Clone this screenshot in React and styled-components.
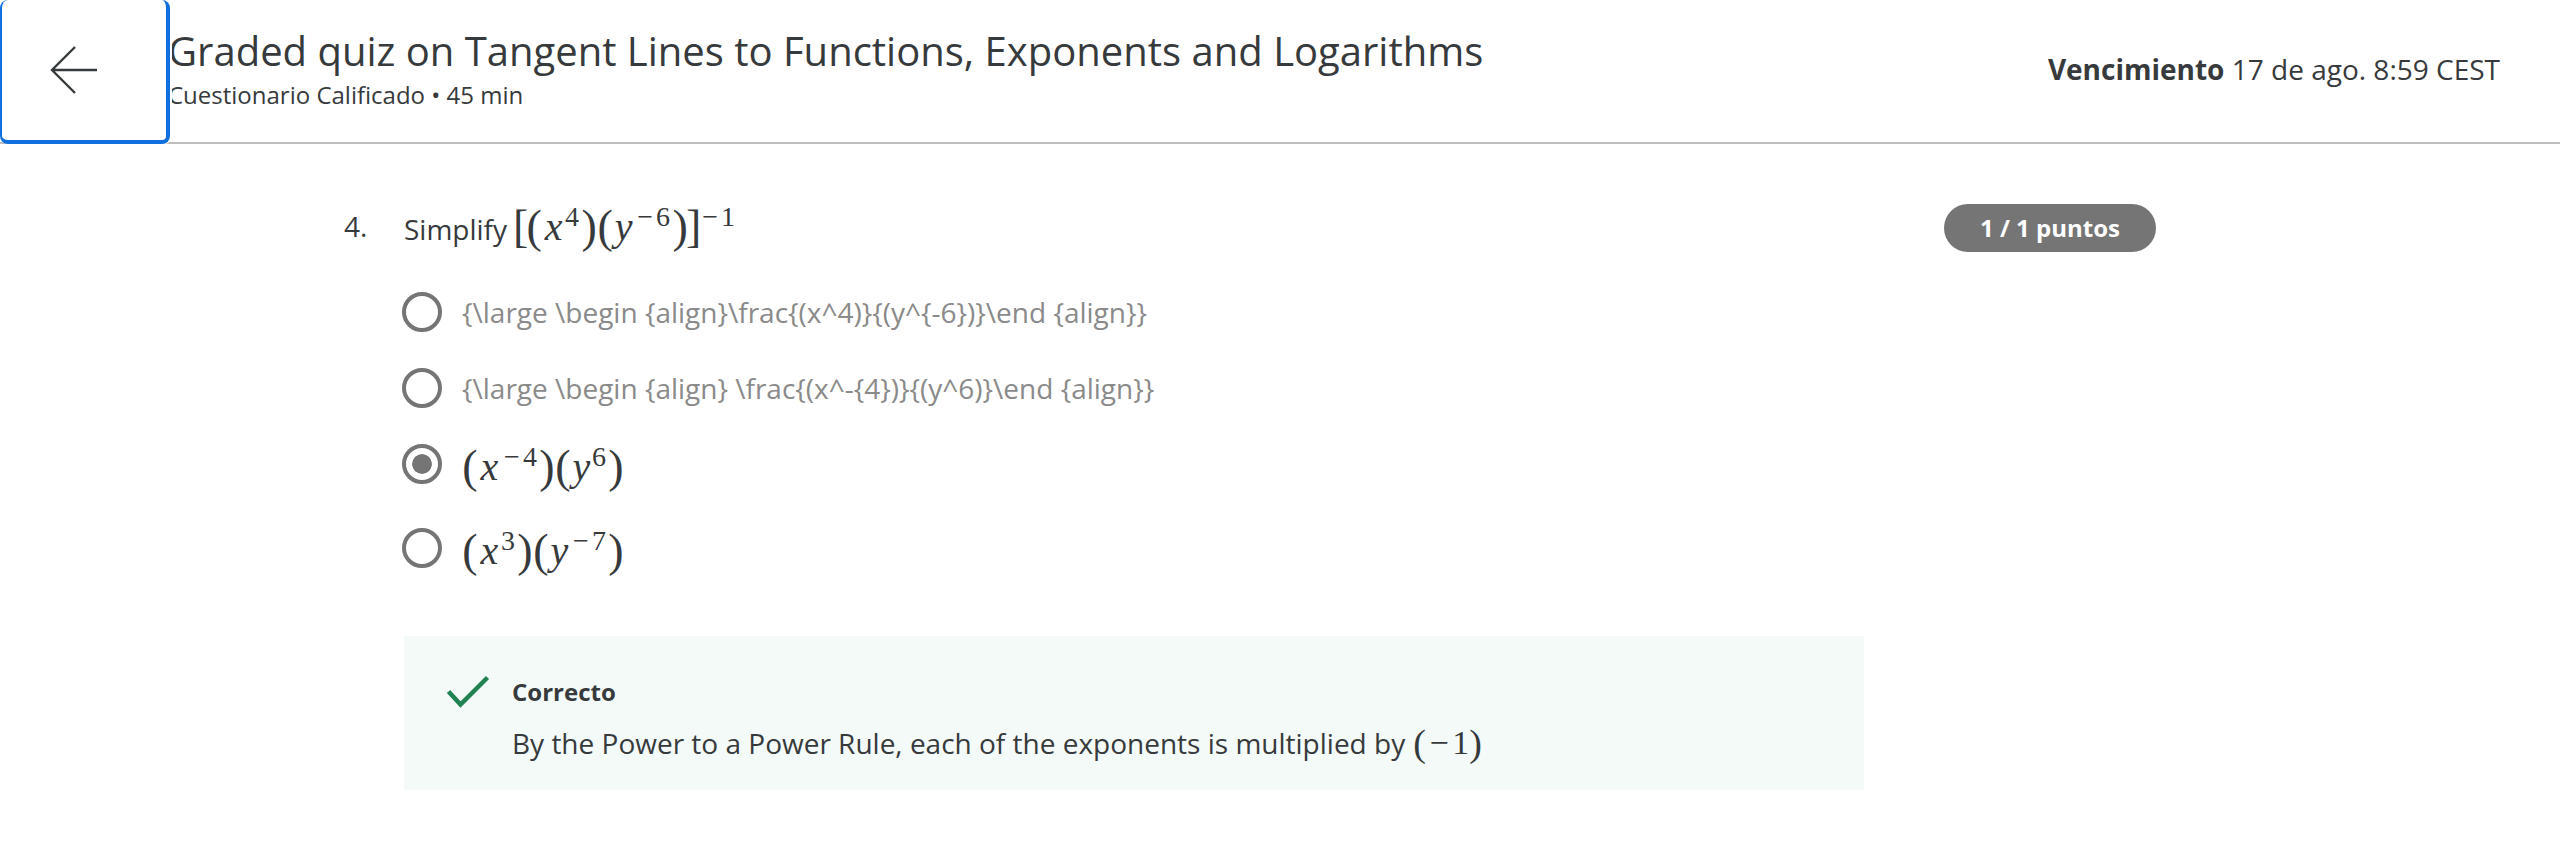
import React from "react";
import styled, { createGlobalStyle } from "styled-components";

const GlobalStyle = createGlobalStyle`
  *, *::before, *::after { box-sizing: border-box; }
  body {
    margin: 0;
    background: #fff;
    color: #373a3c;
    font-family: "Open Sans", "Noto Sans", sans-serif;
    font-size: 28px;
    line-height: 40px;
  }
  h1, h2, p, fieldset { margin: 0; padding: 0; border: 0; }
`;

const Header = styled.header`
  display: flex;
  min-height: 144px;
  border-bottom: 2px solid #bdbdbd;
`;

const BackButton = styled.button`
  position: relative;
  z-index: 1;
  flex: none;
  width: 170px;
  margin: 0 -2px -2px 0;
  padding: 0 20px 0 0;
  display: flex;
  align-items: center;
  justify-content: center;
  background: #fff;
  border: 4px solid #0f6fde;
  border-top-width: 0;
  border-left-width: 2px;
  border-radius: 8px;
  box-shadow: 2px 0 0 #fff;
  color: #373a3c;
  cursor: pointer;
`;

const HeaderContent = styled.div`
  flex: 1;
  min-width: 0;
  display: flex;
  align-items: center;
  justify-content: space-between;
  gap: 40px;
  padding: 0 60px 4px 0;
`;

const Title = styled.h1`
  font-size: 40px;
  line-height: 52px;
  font-weight: 400;
`;

const Subtitle = styled.p`
  font-size: 24px;
  line-height: 36px;
`;

const DueDate = styled.p`
  flex: none;
  strong { font-weight: 700; }
`;

const Question = styled.main`
  max-width: 1872px;
  margin: 0 auto;
  padding: 60px 60px 60px 0;
  display: flex;
  align-items: flex-start;
`;

const QuestionNumber = styled.span`
  flex: none;
  width: 60px;
  padding-top: 2px;
`;

const QuestionBody = styled.div`
  flex: 1;
  min-width: 0;
`;

const Prompt = styled.h2`
  display: flex;
  align-items: baseline;
  gap: 8px;
  height: 70px;
  font-size: 28px;
  font-weight: 400;
`;

const Points = styled.span`
  flex: none;
  min-width: 212px;
  margin-left: 80px;
  padding: 0 36px;
  border-radius: 24px;
  background: #757575;
  color: #fff;
  font-size: 24px;
  line-height: 48px;
  font-weight: 700;
  text-align: center;
`;

const OptionRow = styled.div`
  display: flex;
  align-items: flex-start;
  gap: 20px;
  height: ${(p) => (p.$tall ? 84 : 76)}px;
  margin-left: -2px;
  padding-top: 18px;
`;

const Radio = styled.input`
  appearance: none;
  flex: none;
  width: 40px;
  height: 40px;
  margin: 0;
  padding: 6px;
  border: 4px solid #757575;
  border-radius: 50%;
  background-clip: content-box;
  &:checked {
    background-image: radial-gradient(circle, #757575 10px, transparent 10px);
  }
`;

const OptionLabel = styled.label`
  color: ${(p) => (p.$muted ? "#8a8a8a" : "#373a3c")};
`;

const Feedback = styled.section`
  display: flex;
  gap: 20px;
  margin-top: 42px;
  padding: 36px 40px 16px;
  background: #f4faf8;
`;

const FeedbackTitle = styled.h2`
  font-size: 24px;
  line-height: 40px;
  font-weight: 700;
`;

const FeedbackText = styled.p`
  display: flex;
  align-items: baseline;
  gap: 8px;
  height: 62px;
  padding-top: 8px;
`;

const Formula = styled.span`
  font-family: "Liberation Serif", serif;
  font-size: ${(p) => (p.$small ? 34 : 40)}px;
  line-height: 46px;
  white-space: nowrap;
`;

const Glyph = styled.span`
  display: inline-flex;
  justify-content: center;
  width: ${(p) => p.$width}px;
`;

const Delimiter = styled(Glyph)`
  font-size: ${(p) => (p.$small ? 38 : 46)}px;
  line-height: 32px;
  vertical-align: -2px;
`;

const Variable = styled(Glyph)`
  font-style: italic;
`;

const Raised = styled.sup`
  margin-right: 2px;
  font-size: 28px;
  line-height: 16px;
  vertical-align: 14px;
`;

function Sup({ value }) {
  return (
    <Raised>
      {[...value].map((c, i) => (
        <Glyph key={i} $width={c === "−" ? 22 : 14}>{c}</Glyph>
      ))}
    </Raised>
  );
}

const Open = () => <Delimiter $width={16}>(</Delimiter>;
const Close = () => <Delimiter $width={16}>)</Delimiter>;

function Product({ x, y }) {
  return (
    <>
      <Open /><Variable $width={23}>x</Variable><Sup value={x} /><Close />
      <Open /><Variable $width={21}>y</Variable><Sup value={y} /><Close />
    </>
  );
}

const options = [
  { id: "a", muted: true, content: "{\\large \\begin {align}\\frac{(x^4)}{(y^{-6})}\\end {align}}" },
  { id: "b", muted: true, content: "{\\large \\begin {align} \\frac{(x^-{4})}{(y^6)}\\end {align}}" },
  { id: "c", checked: true, content: <Formula><Product x="−4" y="6" /></Formula> },
  { id: "d", content: <Formula><Product x="3" y="−7" /></Formula> },
];

export default function App() {
  return (
    <>
      <GlobalStyle />
      <Header>
        <BackButton aria-label="Volver">
          <svg width="48" height="48" viewBox="0 0 48 48" fill="none" stroke="currentColor" strokeWidth="2.4">
            <path d="M47 24H2M25 1L2 24L25 47" />
          </svg>
        </BackButton>
        <HeaderContent>
          <div>
            <Title>Graded quiz on Tangent Lines to Functions, Exponents and Logarithms</Title>
            <Subtitle>Cuestionario Calificado • 45 min</Subtitle>
          </div>
          <DueDate><strong>Vencimiento</strong> 17 de ago. 8:59 CEST</DueDate>
        </HeaderContent>
      </Header>
      <Question>
        <QuestionNumber>4.</QuestionNumber>
        <QuestionBody>
          <Prompt>
            Simplify
            <Formula>
              <Delimiter $width={11}>[</Delimiter>
              <Product x="4" y="−6" />
              <Delimiter $width={11}>]</Delimiter>
              <Sup value="−1" />
            </Formula>
          </Prompt>
          <fieldset aria-label="Simplify">
            {options.map((o) => (
              <OptionRow key={o.id} $tall={!o.muted}>
                <Radio type="radio" name="answer" id={`answer-${o.id}`} defaultChecked={o.checked} />
                <OptionLabel htmlFor={`answer-${o.id}`} $muted={o.muted}>{o.content}</OptionLabel>
              </OptionRow>
            ))}
          </fieldset>
          <Feedback>
            <svg width="48" height="40" viewBox="0 0 48 40" fill="none" stroke="#1f8354" strokeWidth="4.5">
              <path d="M4.5 19.500L16.500 32.500L43.500 5.500" />
            </svg>
            <div>
              <FeedbackTitle>Correcto</FeedbackTitle>
              <FeedbackText>
                By the Power to a Power Rule, each of the exponents is multiplied by
                <Formula $small>
                  <Delimiter $small $width={13}>(</Delimiter>
                  <Glyph $width={26}>−</Glyph>
                  <Glyph $width={17}>1</Glyph>
                  <Delimiter $small $width={13}>)</Delimiter>
                </Formula>
              </FeedbackText>
            </div>
          </Feedback>
        </QuestionBody>
        <Points>1 / 1 puntos</Points>
      </Question>
    </>
  );
}
